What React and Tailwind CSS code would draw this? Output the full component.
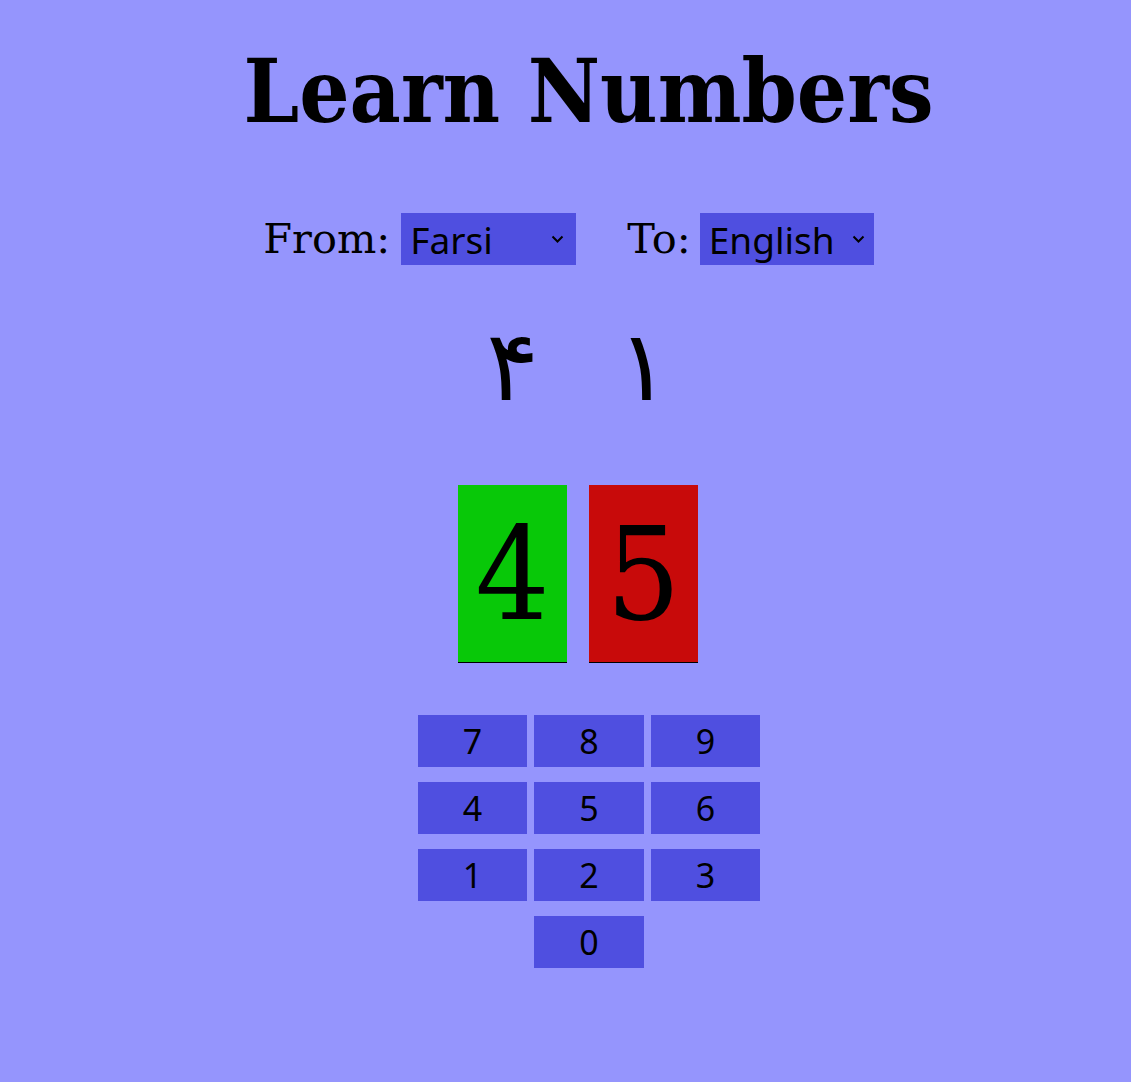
import React from 'react';

const titleFont = { fontFamily: '"DejaVu Serif Condensed", "DejaVu Serif", serif' };
const serif = { fontFamily: '"DejaVu Serif", serif' };

function Chevron() {
  return (
    <svg width="13" height="8" viewBox="0 0 13 8" className="shrink-0">
      <path d="M1.5 1.5l5 5 5-5" fill="none" stroke="#000" strokeWidth="2" />
    </svg>
  );
}

function FakeSelect({ value, width, pr }) {
  return (
    <div
      className={`flex items-center justify-between h-[52px] bg-[#4f4fe0] pl-[9px] text-black text-[37px] leading-none ${width} ${pr}`}
      style={{ fontFamily: '"Noto Sans", sans-serif' }}
    >
      <span>{value}</span>
      <Chevron />
    </div>
  );
}

export default function App() {
  const keys = [7, 8, 9, 4, 5, 6, 1, 2, 3];

  return (
    <div className="min-h-[1082px] w-full bg-[#9595fd] flex flex-col items-center text-black">
      <h1
        className="mt-[47px] pl-[46px] text-[88px] font-bold leading-none"
        style={titleFont}
      >
        Learn Numbers
      </h1>

      <div className="mt-[78px] pl-[6px] flex items-center h-[52px]">
        <span className="text-[41.5px] leading-none mr-[11px]" style={serif}>From:</span>
        <FakeSelect value="Farsi" width="w-[175px]" pr="pr-[12px]" />
        <span className="text-[41.5px] leading-none ml-[51px] mr-[9px]" style={serif}>To:</span>
        <FakeSelect value="English" width="w-[174px]" pr="pr-[9px]" />
      </div>

      <div
        className="mt-[52px] pl-[25px] flex gap-[22px] text-[98px] leading-none"
        style={{ fontFamily: '"DejaVu Sans", sans-serif' }}
      >
        <div className="w-[109px] flex justify-center">۴</div>
        <div className="w-[109px] flex justify-center">۱</div>
      </div>

      <div className="mt-[70px] pl-[25px] flex gap-[22px]">
        <div
          className="w-[109px] h-[178px] bg-[#08c808] border-b border-black flex items-center justify-center text-[130px] leading-none"
          style={titleFont}
        >
          4
        </div>
        <div
          className="w-[109px] h-[178px] bg-[#c80a0a] border-b border-black flex items-center justify-center text-[130px] leading-none"
          style={titleFont}
        >
          5
        </div>
      </div>

      <div
        className="mt-[52px] pl-[47px] grid grid-cols-[109px_110px_109px] gap-x-[7px] gap-y-[15px] text-[34px]"
        style={{ fontFamily: '"Noto Sans", sans-serif' }}
      >
        {keys.map((k) => (
          <div key={k} className="h-[52px] bg-[#4f4fe0] flex items-center justify-center leading-none">
            {k}
          </div>
        ))}
        <div />
        <div className="h-[52px] bg-[#4f4fe0] flex items-center justify-center leading-none">0</div>
      </div>
    </div>
  );
}
